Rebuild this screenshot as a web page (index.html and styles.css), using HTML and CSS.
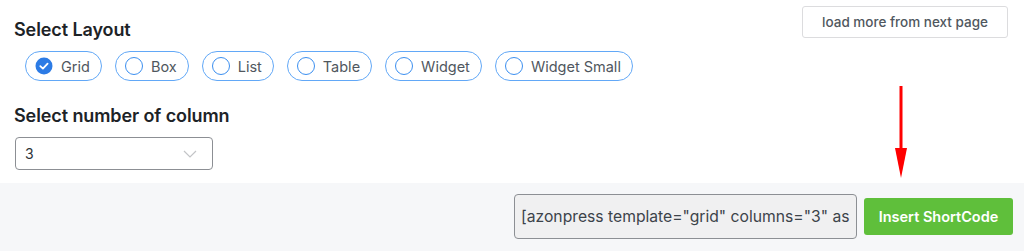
FILE: index.html
```html
<!DOCTYPE html>
<html>
<head>
<meta charset="utf-8">
<link rel="stylesheet" href="styles.css">
</head>
<body>
<div class="page">
  <div class="top">
    <div class="settings">
      <h2 class="title">Select Layout</h2>
      <div class="pills">
        <label class="pill"><span class="radio checked"><svg viewBox="0 0 18 18" width="18" height="18"><circle cx="9" cy="9" r="8.5" fill="#2c7be5"/><path d="M5.3 9.2 L7.9 11.6 L12.6 6.6" fill="none" stroke="#fff" stroke-width="1.8" stroke-linecap="round" stroke-linejoin="round"/></svg></span>Grid</label>
        <label class="pill"><span class="radio"></span>Box</label>
        <label class="pill"><span class="radio"></span>List</label>
        <label class="pill"><span class="radio"></span>Table</label>
        <label class="pill"><span class="radio"></span>Widget</label>
        <label class="pill"><span class="radio"></span>Widget Small</label>
      </div>
      <h2 class="title title2">Select number of column</h2>
      <div class="select"><span>3</span><svg class="chev" viewBox="0 0 14 8" width="14" height="8"><path d="M1 1 L7 7 L13 1" fill="none" stroke="#c3c4c7" stroke-width="1.2"/></svg></div>
    </div>
    <button class="load">load more from next page</button>
  </div>
  <div class="bar">
    <input class="code" type="text" readonly value='[azonpress template="grid" columns="3" asins=""]'>
    <button class="insert">Insert ShortCode</button>
  </div>
  <svg class="arrow" viewBox="0 0 14 92" width="14" height="92"><line x1="7" y1="0" x2="7" y2="66" stroke="#ff0000" stroke-width="3" stroke-linecap="round"/><polygon points="1,62 13,62 7,92" fill="#ff0000"/></svg>
</div>
</body>
</html>
```
FILE: styles.css
```css
* { box-sizing: border-box; }
body {
  margin: 0;
  font-family: Inter, "Noto Sans", sans-serif;
  background: #fff;
  color: #1d2327;
}
.page {
  position: relative;
  width: 1024px;
  height: 251px;
  overflow: hidden;
}
.top {
  display: flex;
  justify-content: space-between;
  align-items: flex-start;
  height: 183px;
  padding: 6px 16px 0 14px;
}
.settings {
  display: flex;
  flex-direction: column;
}
.title {
  margin: 14px 0 0 0;
  font-size: 18px;
  font-weight: 600;
  line-height: 20px;
  color: #1d2327;
  letter-spacing: -0.1px;
}
.title2 { margin-top: 25px; }
.pills {
  display: flex;
  gap: 13px;
  margin: 11px 0 0 11px;
}
.pill {
  display: flex;
  align-items: center;
  gap: 8px;
  height: 30px;
  padding: 0 11px 0 9px;
  border: 1.5px solid #62a8f7;
  border-radius: 16px;
  font-size: 14.5px;
  color: #50575e;
}
.radio {
  display: block;
  width: 18px;
  height: 18px;
  border: 1.5px solid #3b8ff0;
  border-radius: 50%;
}
.radio.checked { border: none; }
.radio svg { display: block; }
.select {
  display: flex;
  align-items: center;
  justify-content: space-between;
  width: 198px;
  height: 33px;
  margin: 11px 0 0 1px;
  padding: 0 15px 0 9px;
  border: 1px solid #8c8f94;
  border-radius: 4px;
  font-size: 14px;
  color: #2c3338;
}
.chev { display: block; }
.load {
  margin-top: 0;
  width: 206px;
  height: 32px;
  background: #fff;
  border: 1px solid #dcdcde;
  border-radius: 3px;
  font-family: Inter, "Noto Sans", sans-serif;
  font-size: 13.5px;
  font-weight: 500;
  color: #50575e;
}
.bar {
  display: flex;
  justify-content: flex-end;
  align-items: center;
  gap: 7px;
  height: 68px;
  padding: 0 11px 1px 0;
  background: #f6f7f9;
}
.code {
  width: 343px;
  height: 45px;
  margin: 0;
  padding: 0 6px;
  border: 1px solid #8c8f94;
  border-radius: 4px;
  background: #f0f0f1;
  font-family: Inter, "Noto Sans", sans-serif;
  font-size: 15.7px;
  color: #3c434a;
  outline: none;
}
.insert {
  width: 149px;
  height: 37px;
  background: #5fbf3b;
  border: none;
  border-radius: 3px;
  font-family: Inter, "Noto Sans", sans-serif;
  font-size: 14.5px;
  font-weight: 600;
  color: #fff;
}
.arrow {
  position: absolute;
  left: 894px;
  top: 86px;
}
```
